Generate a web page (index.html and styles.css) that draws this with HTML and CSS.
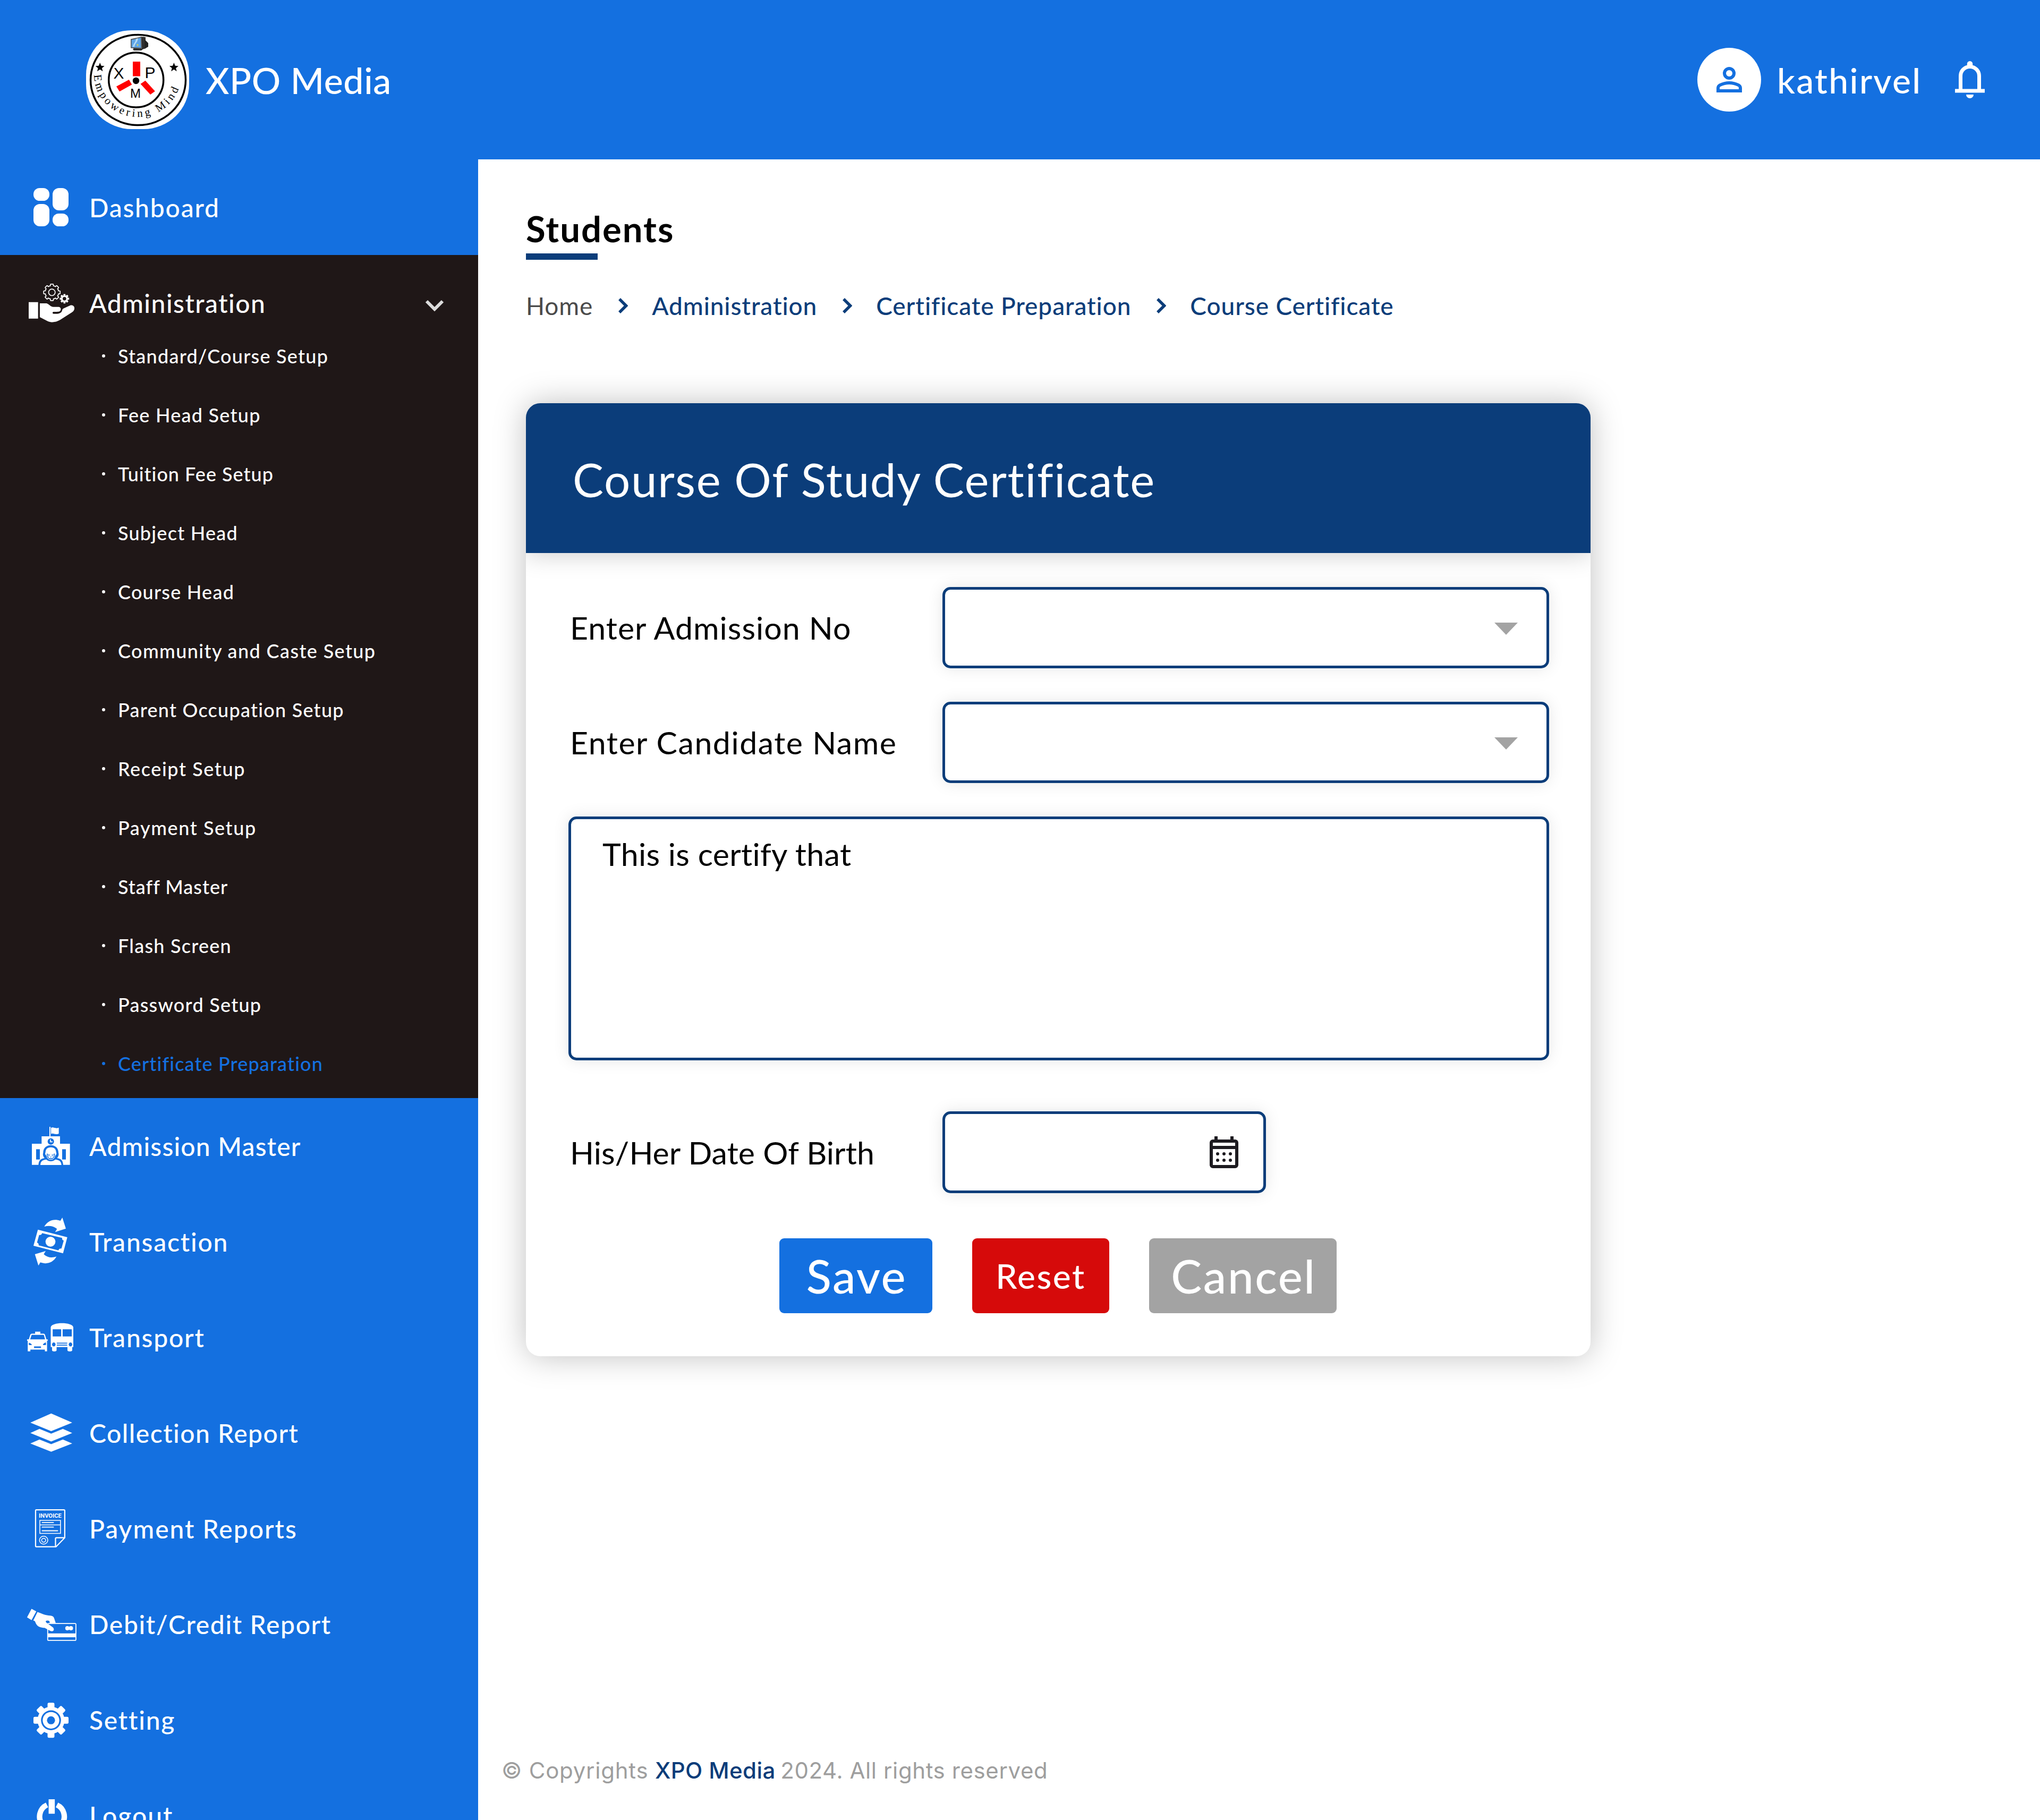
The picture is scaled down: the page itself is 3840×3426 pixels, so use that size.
FILE: index.html
```html
<!DOCTYPE html>
<html lang="en">
<head>
<meta charset="utf-8">
<title>XPO Media - Course Certificate</title>
<link rel="stylesheet" href="styles.css">
</head>
<body>
<header class="topbar">
  <div class="brand">
    <svg class="brand-logo" viewBox="162 57 194 186">
      <rect x="162" y="57" width="194" height="186" rx="86" ry="84" fill="#fff"/>
      <ellipse cx="260" cy="150.500" rx="89.500" ry="85" fill="none" stroke="#000" stroke-width="3.500"/>
      <circle cx="256.200" cy="150.500" r="51.500" fill="none" stroke="#000" stroke-width="3.500"/>
      <path d="M269 69l5 1v21l-6 2-2 2h-14l-2-2z" fill="#333"/>
      <path d="M268 69l2 23-5 3-3-25zM272 74l7 7v7l-7 4z" fill="#222"/>
      <path d="M246 73.500l21-4.500 1 23-22-1.500z" fill="#555"/>
      <path d="M247.500 75l17.500-4 .5 19-18-1z" fill="#5fa5e6"/>
      <path d="M250 88c1-7 5-7 6-15l4-1c-1 8-6 9-7 16z" fill="#b5dcf8"/>
      <path d="M257 83l4 1-2 3z" fill="#e4d64a"/>
      <path id="star" d="M188.200 118l2.300 5.800 6.200.4-4.800 4 1.600 6-5.300-3.400-5.300 3.400 1.600-6-4.800-4 6.200-.4z"/>
      <use href="#star" x="139.200"/>
      <path fill="#f00" d="M250 116h14v27.500h-14zM219 162.700l23.800-12.700 5.500 9.300-23.300 13zM264.500 158l9.100-6.300 18.200 20-8.800 6.300z"/>
      <circle cx="256" cy="152" r="6.200"/>
      <text class="logo-letter" x="213.500" y="148.300" font-size="30">X</text>
      <text class="logo-letter" x="272.500" y="146.700" font-size="30">P</text>
      <text class="logo-letter" x="245" y="184" font-size="24" textLength="20.500">M</text>
      <path id="motto" d="M177 141C178 186 214 220 260 220S342 184 342.500 134" fill="none"/>
      <text class="logo-motto" font-size="21"><textPath href="#motto" textLength="226">Empowering Mind</textPath></text>
    </svg>
    <span class="brand-name">XPO Media</span>
  </div>
  <div class="account">
    <span class="avatar"><svg class="avatar-icon" viewBox="0 -960 960 960"><path d="M480-480q-66 0-113-47t-47-113q0-66 47-113t113-47q66 0 113 47t47 113q0 66-47 113t-113 47ZM160-160v-112q0-34 17.500-62.500T224-378q62-31 126-46.500T480-440q66 0 130 15.500T736-378q29 15 46.500 43.500T800-272v112H160Zm80-80h480v-32q0-11-5.500-20T700-306q-54-27-109-40.500T480-360q-56 0-111 13.500T260-306q-9 5-14.500 14t-5.500 20v32Zm240-320q33 0 56.500-23.500T560-640q0-33-23.500-56.500T480-720q-33 0-56.500 23.500T400-640q0 33 23.500 56.500T480-560Z"/></svg></span>
    <span class="account-name">kathirvel</span>
    <svg class="bell" viewBox="0 -960 960 960"><path d="M160-200v-80h80v-280q0-83 50-147.500T420-792v-28q0-25 17.500-42.500T480-880q25 0 42.500 17.500T540-820v28q80 20 130 84.500T720-560v280h80v80H160Zm320 120q-33 0-56.500-23.500T400-160h160q0 33-23.500 56.500T480-80ZM320-280h320v-280q0-66-47-113t-113-47q-66 0-113 47t-47 113v280Z"/></svg>
  </div>
</header>
<div class="layout">
  <nav class="sidebar">
    <a class="nav-item">
      <svg class="nav-icon" viewBox="48 342 96 96"><rect x="63" y="354" width="30" height="24" rx="11.500"/><rect x="63" y="384" width="30" height="42" rx="12"/><rect x="99" y="354" width="30" height="42" rx="12"/><rect x="99" y="402" width="30" height="24" rx="11.500"/></svg>
      <span class="nav-label">Dashboard</span>
    </a>
    <div class="nav-group">
      <a class="nav-item nav-item-open">
        <svg class="nav-icon" viewBox="9 -9 288 288">
          <g transform="translate(158 76)"><circle r="41"/><g id="cog"><rect id="tooth" x="-11" y="-49" width="22" height="98" rx="5"/><use href="#tooth" transform="rotate(45)"/><use href="#tooth" transform="rotate(90)"/><use href="#tooth" transform="rotate(135)"/></g>
          <g class="cut-dark"><circle r="35.500"/><rect x="-6" y="-44" width="12" height="88"/><rect x="-6" y="-44" width="12" height="88" transform="rotate(45)"/><rect x="-6" y="-44" width="12" height="88" transform="rotate(90)"/><rect x="-6" y="-44" width="12" height="88" transform="rotate(135)"/></g>
          <circle r="18.500" fill="none" stroke="#fff" stroke-width="5"/></g>
          <g transform="translate(229 112)"><circle r="19"/><use href="#cog" transform="scale(.54)"/><circle class="cut-dark" r="10"/></g>
          <path d="M27 131h53v93H27zM90 138h38c14 4 22 20 38 20h30c11 1 16 12 10 21-4 6-10 7-39 7-7 2-7 10 1 11 19 1 33 0 42-8 8-9 4-17 13-22l38-17c14-5 27 5 24 20-2 8-6 13-13 18l-68 44c-26 15-50 15-69 7l-45-23z"/>
        </svg>
        <span class="nav-label">Administration</span>
        <svg class="nav-chevron" viewBox="0 0 36 22"><path d="M3 3l15 15L33 3"/></svg>
      </a>
      <ul class="subnav">
        <li class="subnav-item">Standard/Course Setup</li>
        <li class="subnav-item">Fee Head Setup</li>
        <li class="subnav-item">Tuition Fee Setup</li>
        <li class="subnav-item">Subject Head</li>
        <li class="subnav-item">Course Head</li>
        <li class="subnav-item">Community and Caste Setup</li>
        <li class="subnav-item">Parent Occupation Setup</li>
        <li class="subnav-item">Receipt Setup</li>
        <li class="subnav-item">Payment Setup</li>
        <li class="subnav-item">Staff Master</li>
        <li class="subnav-item">Flash Screen</li>
        <li class="subnav-item">Password Setup</li>
        <li class="subnav-item subnav-item-active">Certificate Preparation</li>
      </ul>
    </div>
    <a class="nav-item">
      <svg class="nav-icon" viewBox="9 -3 288 288">
        <path d="M45 129h55V87h44V36c0-4 6-4 6 0v51h54v42h56v119H45z"/>
        <path d="M153 39c15-7 24 8 44-1v34c-20 9-29-6-44 1z"/>
        <g class="cut"><rect x="69" y="160" width="21" height="58"/><rect x="216" y="160" width="21" height="58"/><circle cx="152" cy="116" r="18"/><path d="M82 249c2-27 13-36 35-39-10-12-11-21-8-31 0-26 18-42 43-42s43 16 43 42c3 10 2 19-8 31 22 3 33 12 35 39z"/></g>
        <path d="M150 105v13h12" fill="none" stroke="#fff" stroke-width="5"/>
        <path d="M93 249c1-21 12-29 34-31 14 13 36 13 50 0 22 2 34 10 35 31zM122 178c0-18 10-29 30-29s30 11 30 29c4 5 1 14-5 18-3 16-13 24-25 24s-22-8-25-24c-6-4-9-13-5-18z"/>
        <path d="M129 184c9 6 37 6 46 0 1 20-9 33-23 33s-24-13-23-33z" class="cut"/>
        <path d="M133 189c8-2 30-2 38 0 0 13-8 23-19 23s-19-10-19-23z"/>
        <path d="M135 193q6-3 12 0m10 0q6-3 12 0m-32 5h7m14 0h7m-13 2v8m-6 5h12" fill="none" class="cut-line" stroke-width="3"/>
      </svg>
      <span class="nav-label label-tight">Admission Master</span>
    </a>
    <a class="nav-item">
      <svg class="nav-icon" viewBox="9 537 288 288">
        <path d="M115 597c20-36 56-46 91-33l11-18 20 62-61 20 11-18c-22-17-45-20-72-13zM184 766c-20 36-56 46-91 33l-11 18-20-64 61-18-11 18c22 20 45 22 72 13z"/>
        <path fill-rule="evenodd" d="M79 614l166 43-24 91-167-43zM103 634c-3 9-9 12-17 10l-12 43c8 3 11 9 9 16l112 28c3-9 9-12 17-10l13-45c-8-2-11-8-9-15z"/>
        <circle cx="150" cy="682" r="28"/>
      </svg>
      <span class="nav-label">Transaction</span>
    </a>
    <a class="nav-item">
      <svg class="nav-icon" viewBox="117.600 924.200 235.200 228" preserveAspectRatio="none">
        <path fill-rule="evenodd" d="M234 994c4-24 100-24 104 0v89h-5v14c0 7-22 7-22 0v-14h-50v14c0 7-21 7-21 0v-14h-6zM243 1003v32h39v-32zM289 1003v32h42v-32zM248 1062a8 9 0 1 0 .1 0zM325 1062a8 9 0 1 0 .1 0zM262 1063v4h48v-4zM262 1072v4h48v-4z"/>
        <path fill-rule="evenodd" d="M162 1014h24v9h16c4 1 5 3 6 6l6 19h6v7h-3v47h-10v-8h-67v8h-12v-47h-3v-7h8l6-19c1-3 3-5 7-6h16zM146 1028l-7 20h69l-6-20zM133 1063v11h14c-1-6-7-9-14-11zM212 1062c-8 2-14 6-14 12h14zM157 1080v7h32v-7z"/>
      </svg>
      <span class="nav-label">Transport</span>
    </a>
    <a class="nav-item">
      <svg class="nav-icon" viewBox="117.600 1352 235.200 228" preserveAspectRatio="none"><path d="M236 1380l97 41-97 38-96-38zM140 1467l42-18 54 21 54-21 43 18-97 38zM140 1514l42-18 54 21 54-21 43 18-97 37z"/></svg>
      <span class="nav-label label-snug">Collection Report</span>
    </a>
    <a class="nav-item">
      <svg class="nav-icon" viewBox="107.500 162.500 215 226" preserveAspectRatio="none">
        <g fill="none" stroke="#fff"><path stroke-width="5" d="M153 193.500h116q4 0 4 4V317l-37 40h-83q-3 0-3-4V197q0-3.500 3-3.500zM272 317h-34q-4 0-4 4v35"/><path stroke-width="3.500" d="M168 240h87v58h-87zM168 260h87"/><path stroke-width="4.500" d="M178 250h47M178 270h47M178 286h65" stroke-linecap="round"/><circle cx="184" cy="328" r="17.500" stroke-width="3.500"/><circle cx="184" cy="328" r="8.500" stroke-width="3.500"/></g>
        <text class="invoice-text" x="163.500" y="228" font-size="25" textLength="96" lengthAdjust="spacingAndGlyphs">INVOICE</text>
      </svg>
      <span class="nav-label label-wide">Payment Reports</span>
    </a>
    <a class="nav-item">
      <svg class="nav-icon" viewBox="107.500 586.200 215 226" preserveAspectRatio="none">
        <rect x="201" y="697" width="119" height="75" rx="4" fill="none" stroke="#fff" stroke-width="4"/><path d="M202 741h117v17H202z"/><ellipse cx="284" cy="718" rx="9" ry="9.500"/><ellipse cx="299" cy="718" rx="9" ry="9.500"/>
        <path d="M133 632l20 11-20 39-19-12zM158 646c22 9 35 15 53 16 13 1 16 7 18 14l6 19h-26c2-7-2-11-9-11-9 0-9 6-2 11l26 20c8 12-1 20-12 15l-24-14c-15 0-30-4-37-20-3-7-3-11-11-12z"/>
      </svg>
      <span class="nav-label label-debit">Debit/Credit Report</span>
    </a>
    <a class="nav-item">
      <svg class="nav-icon" viewBox="107.500 1010 215 226" preserveAspectRatio="none">
        <g transform="translate(215 1126) scale(1 1.050)"><circle r="57"/><rect id="gear-tooth" x="-14.500" y="-74" width="29" height="148" rx="6"/><use href="#gear-tooth" transform="rotate(45)"/><use href="#gear-tooth" transform="rotate(90)"/><use href="#gear-tooth" transform="rotate(135)"/><circle class="cut" r="42"/><circle r="35"/><circle class="cut" r="17"/></g>
      </svg>
      <span class="nav-label">Setting</span>
    </a>
    <a class="nav-item">
      <svg class="nav-icon" viewBox="107.500 1433.600 215 226" preserveAspectRatio="none"><path d="M205 1476h26v64h-26z"/><path d="M198 1501a52 56 0 1 0 42 0" fill="none" stroke="#fff" stroke-width="23"/></svg>
      <span class="nav-label label-wide">Logout</span>
    </a>
  </nav>
  <main class="main">
    <h1 class="page-title">Students</h1>
    <div class="breadcrumb">
      <span class="crumb-home">Home</span>
      <svg class="crumb-sep" viewBox="0 0 19 31"><path d="M3 3l12.500 12.500L3 28"/></svg>
      <span>Administration</span>
      <svg class="crumb-sep" viewBox="0 0 19 31"><path d="M3 3l12.500 12.500L3 28"/></svg>
      <span>Certificate Preparation</span>
      <svg class="crumb-sep" viewBox="0 0 19 31"><path d="M3 3l12.500 12.500L3 28"/></svg>
      <span>Course Certificate</span>
    </div>
    <section class="card">
      <div class="card-head"><span class="card-title">Course Of Study Certificate</span></div>
      <div class="card-body">
        <div class="form-row"><span class="label">Enter Admission No</span><div class="field field-select"><svg class="caret" viewBox="0 0 44 23"><path d="M0 0h44L22 23z"/></svg></div></div>
        <div class="form-row"><span class="label label-name">Enter Candidate Name</span><div class="field field-select"><svg class="caret" viewBox="0 0 44 23"><path d="M0 0h44L22 23z"/></svg></div></div>
        <div class="field field-text">This is certify that</div>
        <div class="form-row form-row-date"><span class="label label-date">His/Her Date Of Birth</span><div class="field field-date"><svg class="calendar" viewBox="0 -960 960 960"><path d="M200-80q-33 0-56.500-23.500T120-160v-560q0-33 23.500-56.500T200-800h40v-80h80v80h320v-80h80v80h40q33 0 56.500 23.500T840-720v560q0 33-23.500 56.500T760-80H200Zm0-80h560v-400H200v400Zm0-480h560v-80H200v80Z"/><circle cx="320" cy="-440" r="40"/><circle cx="480" cy="-440" r="40"/><circle cx="640" cy="-440" r="40"/><circle cx="320" cy="-280" r="40"/><circle cx="480" cy="-280" r="40"/><circle cx="640" cy="-280" r="40"/></svg></div></div>
        <div class="actions">
          <button class="btn btn-save">Save</button>
          <button class="btn btn-reset">Reset</button>
          <button class="btn btn-cancel">Cancel</button>
        </div>
      </div>
    </section>
    <footer class="footer">© Copyrights <span class="footer-brand">XPO Media</span> <span class="footer-rights">2024. All rights reserved</span></footer>
  </main>
</div>
</body>
</html>
```
FILE: styles.css
```css
:root {
  --blue: #1470e0;
  --navy: #0b3d7a;
  --dark: #1f1717;
}
* { box-sizing: border-box; }
body {
  margin: 0;
  width: 3840px;
  height: 3426px;
  overflow: hidden;
  background: #fff;
  color: #000;
  font-family: Lato, "Noto Sans", sans-serif;
}
.topbar {
  display: flex;
  align-items: center;
  justify-content: space-between;
  height: 300px;
  padding: 0 90px 0 162px;
  background: var(--blue);
  color: #fff;
}
.brand { display: flex; align-items: center; gap: 31px; }
.brand-logo { width: 194px; height: 186px; display: block; }
.logo-letter { font-family: "Liberation Sans", sans-serif; fill: #000; }
.logo-motto { font-family: "Liberation Serif", serif; fill: #000; }
.brand-name { font-size: 68px; font-weight: 500; letter-spacing: .6px; }
.account { display: flex; align-items: center; }
.avatar {
  display: flex;
  align-items: center;
  justify-content: center;
  width: 120px;
  height: 120px;
  border-radius: 50%;
  background: #fff;
}
.avatar-icon { width: 72px; height: 72px; fill: var(--blue); }
.account-name { width: 321px; margin-left: 30px; font-size: 66px; font-weight: 500; letter-spacing: 2.3px; }
.bell { width: 84px; height: 84px; fill: #fff; }
.layout { display: flex; height: 3126px; }
.sidebar { width: 900px; flex: none; overflow: hidden; background: var(--blue); color: #fff; }
.nav-item {
  display: flex;
  align-items: center;
  height: 180px;
  padding: 0 64px 0 48px;
}
.nav-item-open { height: 135px; padding-top: 45px; }
.nav-icon { width: 96px; height: 96px; flex: none; fill: #fff; }
.cut { fill: var(--blue); }
.cut-line { stroke: var(--blue); }
.cut-dark { fill: var(--dark); }
.invoice-text { font-family: Roboto, sans-serif; font-weight: 700; }
.nav-label { margin-left: 24px; font-size: 48px; font-weight: 500; white-space: nowrap; letter-spacing: 1.8px; }
.nav-item-open .nav-label, .label-snug { letter-spacing: 1.5px; }
.label-tight { letter-spacing: 1.2px; }
.label-wide { letter-spacing: 2px; }
.label-debit { letter-spacing: 1.65px; }
.nav-chevron { width: 36px; height: 22px; margin-left: auto; margin-top: 9px; }
.nav-chevron path { fill: none; stroke: #dcdcdc; stroke-width: 6; }
.nav-group { background: var(--dark); padding-bottom: 9px; }
.subnav { list-style: none; margin: 0; padding: 0 0 0 192px; }
.subnav-item {
  display: flex;
  align-items: center;
  height: 111px;
  padding-bottom: 1px;
  font-size: 36px;
  font-weight: 500;
  letter-spacing: 1.25px;
}
.subnav-item:nth-child(3), .subnav-item:nth-child(10) { letter-spacing: 1px; }
.subnav-item:nth-child(6) { letter-spacing: 1.4px; }
.subnav-item:nth-child(8), .subnav-item:nth-child(9) { letter-spacing: 1.6px; }
.subnav-item:nth-child(13) { letter-spacing: 1.15px; }
.subnav-item::before {
  content: "";
  width: 6px;
  height: 6px;
  margin-right: 24px;
  border-radius: 50%;
  background: currentColor;
}
.subnav-item-active { color: var(--blue); }
.main { flex: 1; display: flex; flex-direction: column; padding: 84px 0 63px 90px; }
.page-title { margin: 0; font-size: 67px; line-height: 93px; font-weight: 700; letter-spacing: 2px; }
.page-title::after { content: ""; display: block; width: 135px; height: 12px; background: var(--navy); }
.breadcrumb {
  display: flex;
  align-items: center;
  height: 60px;
  margin-top: 56px;
  color: var(--navy);
  font-size: 46px;
  font-weight: 500;
  letter-spacing: .9px;
  white-space: nowrap;
}
.crumb-home { color: #4a4a4a; font-weight: 400; }
.crumb-sep { width: 19px; height: 31px; margin: 0 45px 0 47px; }
.crumb-sep path { fill: none; stroke: var(--navy); stroke-width: 5.5; }
.card {
  width: 2004px;
  margin-top: 154px;
  border-radius: 27px;
  overflow: hidden;
  box-shadow: 0 0 60px rgba(0, 0, 0, .25);
}
.card-head {
  display: flex;
  align-items: center;
  height: 282px;
  padding: 4px 0 0 88px;
  background: var(--navy);
  color: #fff;
  box-shadow: 0 0 45px rgba(0, 0, 0, .22);
}
.card-title { font-size: 87px; font-weight: 400; letter-spacing: 1.7px; }
.card-body { padding: 64px 78px 81px 80px; }
.form-row { display: flex; align-items: center; margin-bottom: 63px; }
.label { width: 704px; padding-left: 3px; font-size: 59px; letter-spacing: 1.05px; white-space: nowrap; }
.label-name { letter-spacing: 1.55px; }
.label-date { letter-spacing: .1px; }
.field {
  border: 5px solid var(--navy);
  border-radius: 15px;
  background: #fff;
  box-shadow: 0 0 30px rgba(0, 0, 0, .1);
}
.field-select { display: flex; align-items: center; justify-content: flex-end; width: 1142px; height: 153px; padding: 3px 54px 0 0; }
.caret { width: 44px; height: 23px; fill: #a3a3a3; }
.field-text { height: 459px; padding: 30px 59px; font-size: 59px; line-height: 71px; letter-spacing: .35px; }
.form-row-date { margin: 96px 0 85px; }
.field-date { display: flex; align-items: center; justify-content: flex-end; width: 609px; height: 154px; padding-right: 38px; }
.calendar { width: 72px; height: 72px; fill: #1d1b20; }
.actions { display: flex; gap: 75px; padding-left: 397px; }
.btn {
  height: 141px;
  padding: 0 0 0 3px;
  border: 0;
  border-radius: 9px;
  color: #fff;
  font: 500 87px Lato, "Noto Sans", sans-serif;
  letter-spacing: 2.6px;
}
.btn-save { width: 288px; background: var(--blue); }
.btn-reset { width: 258px; padding-left: 0; background: #d60a0a; font-size: 64px; }
.btn-cancel { width: 353px; background: #a3a3a3; }
.footer {
  margin: auto 0 0 -46px;
  color: #9e9e9e;
  font: 400 42px/60px Inter, "Noto Sans", sans-serif;
  letter-spacing: .75px;
  white-space: nowrap;
}
.footer-brand { color: var(--navy); font-weight: 500; letter-spacing: .4px; }
.footer-rights { margin-left: -3px; letter-spacing: .6px; }
```
